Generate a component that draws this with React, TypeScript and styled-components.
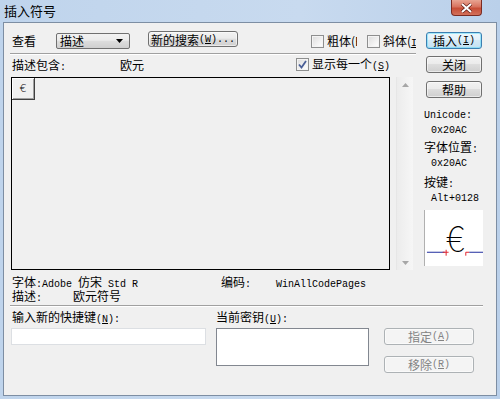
import React from "react";
import styled, { createGlobalStyle } from "styled-components";

const GlobalStyle = createGlobalStyle`
  html, body {
    margin: 0;
    padding: 0;
  }
  body {
    width: 500px;
    height: 399px;
    overflow: hidden;
    font-family: "Noto Sans CJK SC", sans-serif;
    font-size: 12px;
    color: #000;
  }
`;

const Frame = styled.div`
  width: 500px;
  height: 399px;
  box-sizing: border-box;
  padding: 0 3px 3px 3px;
  display: flex;
  flex-direction: column;
  background: linear-gradient(to right, #bfd4ec, #c8daef 60%, #bad0ea);
`;

const TitleBar = styled.div`
  height: 22px;
  display: flex;
  justify-content: space-between;
  align-items: flex-start;
`;

const Title = styled.div`
  padding: 2px 0 0 1px;
  font-size: 13px;
  line-height: 18px;
  color: #000;
`;

const CloseBtn = styled.div`
  width: 31px;
  height: 16px;
  margin-right: 15px;
  box-sizing: border-box;
  border: 1px solid #7b2b22;
  border-top: none;
  border-radius: 0 0 4px 4px;
  background: linear-gradient(#e8a492, #d8735f 45%, #c74d36 55%, #d2705a);
  display: flex;
  align-items: center;
  justify-content: center;
`;

const Body = styled.div`
  flex: 1;
  background: #f0f0f0;
  border: 1px solid #7d8ea3;
  padding: 8px 0 0 6px;
  display: flex;
  flex-direction: column;
`;

const Top = styled.div`
  display: grid;
  grid-template-columns: 406px 59px;
  column-gap: 8px;
`;

const Main = styled.div`
  display: flex;
  flex-direction: column;
`;

const Side = styled.div`
  display: flex;
  flex-direction: column;
`;

const Row = styled.div<{ $h: number; $mt?: number }>`
  display: flex;
  align-items: flex-start;
  height: ${(p) => p.$h}px;
  margin-top: ${(p) => p.$mt ?? 0}px;
  line-height: 14px;
  white-space: nowrap;
`;

const Label = styled.div<{ $w?: number; $mt?: number; $ml?: number }>`
  width: ${(p) => (p.$w ? `${p.$w}px` : "auto")};
  margin-top: ${(p) => p.$mt ?? 0}px;
  margin-left: ${(p) => p.$ml ?? 0}px;
  height: 14px;
  line-height: 14px;
  white-space: nowrap;
  flex-shrink: 0;
`;

const Lat = styled.span`
  font-family: "Liberation Mono", monospace;
  font-size: 10px;
  white-space: pre;
`;

const Select = styled.div`
  width: 79px;
  height: 16px;
  margin: 2px 0 0 0;
  box-sizing: border-box;
  border: 1px solid #707070;
  border-radius: 2px;
  background: linear-gradient(#f2f2f2, #ebebeb 45%, #dddddd 50%, #cfcfcf);
  display: flex;
  align-items: center;
  justify-content: space-between;
  padding: 0 6px 0 3px;
  line-height: 14px;
`;

const Btn = styled.div<{
  $w: number;
  $primary?: boolean;
  $disabled?: boolean;
  $mt?: number;
  $ml?: number;
}>`
  width: ${(p) => p.$w}px;
  height: 17px;
  margin-top: ${(p) => p.$mt ?? 0}px;
  margin-left: ${(p) => p.$ml ?? 0}px;
  box-sizing: border-box;
  border-radius: 3px;
  border: 1px solid
    ${(p) => (p.$primary ? "#3c7fb1" : p.$disabled ? "#adb2b5" : "#707070")};
  background: ${(p) =>
    p.$primary
      ? "linear-gradient(#eef7fc, #e2f1fa 45%, #d2e9f6 50%, #c4e1f2)"
      : p.$disabled
      ? "#f4f4f4"
      : "linear-gradient(#f2f2f2, #ebebeb 45%, #dddddd 50%, #cfcfcf)"};
  box-shadow: inset 0 0 0 1px
    ${(p) => (p.$primary ? "rgba(72,215,251,0.45)" : "rgba(255,255,255,0.55)")};
  color: ${(p) => (p.$disabled ? "#838383" : "#000")};
  display: flex;
  align-items: center;
  justify-content: center;
  line-height: 15px;
  white-space: nowrap;
  flex-shrink: 0;
`;

const Check = styled.div<{ $ml: number; $mt: number }>`
  display: flex;
  align-items: flex-start;
  margin-left: ${(p) => p.$ml}px;
  margin-top: ${(p) => p.$mt}px;
  flex-shrink: 0;
`;

const Box = styled.div`
  width: 13px;
  height: 13px;
  box-sizing: border-box;
  border: 1px solid #8e8f8f;
  background: linear-gradient(135deg, #dcdcdc, #f6f6f6 70%, #fff);
  box-shadow: inset 0 0 0 1px #f4f4f4;
  display: flex;
  align-items: center;
  justify-content: center;
`;

const CheckText = styled.div<{ $w?: number }>`
  margin-left: 3px;
  width: ${(p) => (p.$w ? `${p.$w}px` : "auto")};
  overflow: hidden;
  white-space: nowrap;
  line-height: 14px;
  margin-top: -1px;
`;

const Separator = styled.div<{ $mt: number; $w?: number }>`
  margin-top: ${(p) => p.$mt}px;
  width: ${(p) => (p.$w ? `${p.$w}px` : "auto")};
  border-top: 1px solid #a0a0a0;
  border-bottom: 1px solid #fff;
`;

const GridArea = styled.div`
  display: flex;
  margin-top: 5px;
  height: 193px;
`;

const CharGrid = styled.div`
  width: 379px;
  height: 193px;
  margin-left: 1px;
  box-sizing: border-box;
  border: 1px solid #000;
  background: #f0f0f0;
`;

const Cell = styled.div`
  width: 23px;
  height: 22px;
  box-sizing: border-box;
  border-right: 1px solid #404040;
  border-bottom: 1px solid #404040;
  box-shadow: inset 1px 1px 0 #fff, inset -1px -1px 0 #a0a0a0;
  background: #f0f0f0;
  display: flex;
  align-items: center;
  justify-content: center;
  font-family: "DejaVu Sans", sans-serif;
  font-weight: 300;
  font-size: 11px;
`;

const Scroll = styled.div`
  width: 17px;
  height: 193px;
  margin-left: 6px;
  box-sizing: border-box;
  border-left: 1px solid #e6e6e6;
  background: linear-gradient(to right, #ececec, #f6f6f6);
  display: flex;
  flex-direction: column;
  justify-content: space-between;
  align-items: center;
  padding: 6px 0 5px;
`;

const InfoBlock = styled.div`
  margin-top: 5px;
  padding-left: 2px;
  display: flex;
  flex-direction: column;
`;

const SideText = styled.div<{ $mt?: number; $indent?: number }>`
  margin-top: ${(p) => p.$mt ?? 0}px;
  padding-left: ${(p) => p.$indent ?? 0}px;
  height: 14px;
  line-height: 14px;
  white-space: nowrap;
`;

const Preview = styled.svg`
  margin-top: 7px;
  display: block;
  width: 59px;
  height: 56px;
  background: #fff;
  border-left: 1px solid #b0b0b0;
  box-sizing: border-box;
`;

const Bottom = styled.div`
  display: grid;
  grid-template-columns: 195px 153px 90px;
  grid-template-rows: 15px auto;
  column-gap: 10px;
  margin-top: 3px;
  padding-left: 1px;
`;

const Input = styled.div`
  height: 17px;
  box-sizing: border-box;
  border: 1px solid #dcdfe3;
  background: #fff;
  margin-top: 3px;
`;

const KeyBox = styled.div`
  height: 38px;
  box-sizing: border-box;
  border: 1px solid #828790;
  background: #fff;
  margin-top: 3px;
`;

const BtnStack = styled.div`
  display: flex;
  flex-direction: column;
  gap: 11px;
  margin: 3px 0 0 5px;
`;

const Arrow = ({ up }: { up?: boolean }) => (
  <svg width="7" height="4" viewBox="0 0 7 4">
    <path d={up ? "M0 4 L3.5 0 L7 4 Z" : "M0 0 L3.5 4 L7 0 Z"} fill="#a6a6a6" />
  </svg>
);

const Tick = () => (
  <svg width="9" height="9" viewBox="0 0 9 9">
    <path
      d="M1 4.5 L3.5 7.5 L8 1"
      fill="none"
      stroke="#4a5f97"
      strokeWidth="1.8"
    />
  </svg>
);

export default function App() {
  return (
    <>
      <GlobalStyle />
      <Frame>
        <TitleBar>
          <Title>插入符号</Title>
          <CloseBtn>
            <svg width="13" height="10" viewBox="0 0 13 10">
              <path d="M2 1 L11 9 M11 1 L2 9" stroke="#5e1c15" strokeWidth="3.4" />
              <path d="M2 1 L11 9 M11 1 L2 9" stroke="#fff" strokeWidth="2" />
            </svg>
          </CloseBtn>
        </TitleBar>
        <Body>
          <Top>
            <Main>
              <Row $h={18}>
                <Label $w={44} $mt={3} $ml={2}>
                  查看
                </Label>
                <Select>
                  <span>描述</span>
                  <svg width="7" height="4" viewBox="0 0 7 4">
                    <path d="M0 0 L7 0 L3.5 4 Z" fill="#000" />
                  </svg>
                </Select>
                <Btn $w={90} $ml={18} style={{ height: 16 }}>
                  新的搜索
                  <Lat>
                    (<u>W</u>)...
                  </Lat>
                </Btn>
                <Check $ml={73} $mt={4}>
                  <Box />
                  <CheckText $w={30}>粗体(B)</CheckText>
                </Check>
                <Check $ml={10} $mt={4}>
                  <Box />
                  <CheckText $w={33}>
                    斜体(<Lat><u>I</u></Lat>)
                  </CheckText>
                </Check>
              </Row>
              <Separator $mt={4} />
              <Row $h={14} $mt={3}>
                <Label $w={108} $ml={2}>
                  描述包含<Lat>:</Lat>
                </Label>
                <Label $w={176}>欧元</Label>
                <Check $ml={0} $mt={0}>
                  <Box>
                    <Tick />
                  </Box>
                  <CheckText>
                    显示每一个<Lat>(<u>S</u>)</Lat>
                  </CheckText>
                </Check>
              </Row>
              <GridArea>
                <CharGrid>
                  <Cell>€</Cell>
                </CharGrid>
                <Scroll>
                  <Arrow up />
                  <Arrow />
                </Scroll>
              </GridArea>
              <InfoBlock>
                <Row $h={14}>
                  <Label $w={209}>
                    字体<Lat>:Adobe </Lat>仿宋<Lat> Std R</Lat>
                  </Label>
                  <Label $w={55}>
                    编码<Lat>:</Lat>
                  </Label>
                  <Label>
                    <Lat>WinAllCodePages</Lat>
                  </Label>
                </Row>
                <Row $h={14}>
                  <Label $w={61}>
                    描述<Lat>:</Lat>
                  </Label>
                  <Label>欧元符号</Label>
                </Row>
              </InfoBlock>
            </Main>
            <Side>
              <Btn $w={56} $ml={2} $mt={1} $primary>
                插入<Lat>(<u>I</u>)</Lat>
              </Btn>
              <Btn $w={56} $ml={2} $mt={7}>
                关闭
              </Btn>
              <Btn $w={56} $ml={2} $mt={8}>
                帮助
              </Btn>
              <SideText $mt={8}>
                <Lat>Unicode:</Lat>
              </SideText>
              <SideText $mt={1} $indent={7}>
                <Lat>0x20AC</Lat>
              </SideText>
              <SideText $mt={5}>
                字体位置<Lat>:</Lat>
              </SideText>
              <SideText $indent={7}>
                <Lat>0x20AC</Lat>
              </SideText>
              <SideText $mt={7}>
                按键<Lat>:</Lat>
              </SideText>
              <SideText $indent={7}>
                <Lat>Alt+0128</Lat>
              </SideText>
              <Preview viewBox="0 0 59 56">
                <path d="M2 42.5 H20" stroke="#1c2a9c" strokeWidth="1" />
                <path d="M18 42.5 H24 M21.5 40 V46" stroke="#e0202a" strokeWidth="1" />
                <path d="M41.5 46 V42.5 H45" stroke="#e0202a" strokeWidth="1" fill="none" />
                <path d="M45 42.5 H59" stroke="#1c2a9c" strokeWidth="1" />
                <text
                  x="21"
                  y="42"
                  fontFamily="Noto Sans CJK SC, sans-serif"
                  fontWeight="100"
                  fontSize="36"
                  fill="#000"
                >
                  €
                </text>
              </Preview>
            </Side>
          </Top>
          <Separator $mt={2} $w={473} />
          <Bottom>
            <Label $ml={1}>
              输入新的快捷键<Lat>(<u>N</u>):</Lat>
            </Label>
            <Label>
              当前密钥<Lat>(<u>U</u>):</Lat>
            </Label>
            <div />
            <div>
              <Input />
            </div>
            <div>
              <KeyBox />
            </div>
            <BtnStack>
              <Btn $w={90} $disabled>
                指定<Lat>(<u>A</u>)</Lat>
              </Btn>
              <Btn $w={90} $disabled>
                移除<Lat>(<u>R</u>)</Lat>
              </Btn>
            </BtnStack>
          </Bottom>
        </Body>
      </Frame>
    </>
  );
}
